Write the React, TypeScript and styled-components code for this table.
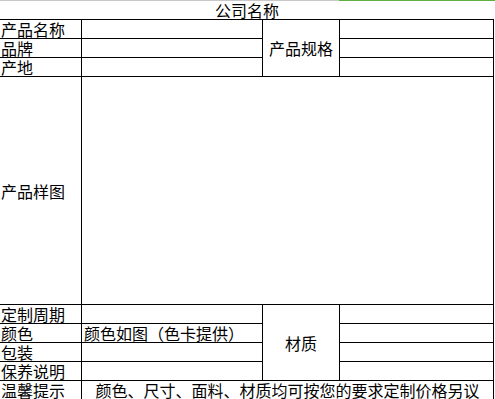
import styled, { createGlobalStyle } from 'styled-components';

const GlobalStyle = createGlobalStyle`
  html, body {
    margin: 0;
    padding: 0;
    background: #ffffff;
  }
  body {
    font-family: "Noto Sans CJK SC", "Noto Sans", sans-serif;
    color: #000000;
  }
`;

const Sheet = styled.div`
  width: 495px;
  height: 399px;
  overflow: hidden;
  background: #ffffff;
`;

const TopEdge = styled.div`
  display: flex;
  height: 1px;
`;

const EdgePart = styled.div<{ $color: string; $width: string }>`
  width: ${(p) => p.$width};
  flex: ${(p) => (p.$width === 'auto' ? 1 : 'none')};
  background: ${(p) => p.$color};
`;

const Grid = styled.div`
  display: grid;
  width: 494px;
  grid-template-columns: 82px 181px 77px 154px;
  grid-template-rows: 19px 19px 19px 19px 228px 19px 19px 19px 19px 19px;
`;

const Cell = styled.div<{ $col: string; $row: string; $center?: boolean; $pad?: number }>`
  grid-column: ${(p) => p.$col};
  grid-row: ${(p) => p.$row};
  box-sizing: border-box;
  border-right: 1px solid #000000;
  border-bottom: 1px solid #000000;
  display: flex;
  align-items: center;
  justify-content: ${(p) => (p.$center ? 'center' : 'flex-start')};
  padding-left: ${(p) => (p.$center ? 0 : p.$pad ?? 1)}px;
  font-size: 16px;
  line-height: 16px;
  white-space: nowrap;
`;

const Title = styled(Cell)`
  border-right: none;
`;

export default function App() {
  return (
    <Sheet>
      <GlobalStyle />
      <TopEdge>
        <EdgePart $color="#c8c8c8" $width="339px" />
        <EdgePart $color="#5fb041" $width="auto" />
      </TopEdge>
      <Grid>
        <Title $col="1 / 5" $row="1" $center>公司名称</Title>

        <Cell $col="1" $row="2">产品名称</Cell>
        <Cell $col="2" $row="2" />
        <Cell $col="3" $row="2 / 5" $center>产品规格</Cell>
        <Cell $col="4" $row="2" />

        <Cell $col="1" $row="3">品牌</Cell>
        <Cell $col="2" $row="3" />
        <Cell $col="4" $row="3" />

        <Cell $col="1" $row="4">产地</Cell>
        <Cell $col="2" $row="4" />
        <Cell $col="4" $row="4" />

        <Cell $col="1" $row="5">产品样图</Cell>
        <Cell $col="2 / 5" $row="5" />

        <Cell $col="1" $row="6">定制周期</Cell>
        <Cell $col="2" $row="6" />
        <Cell $col="3" $row="6 / 10" $center>材质</Cell>
        <Cell $col="4" $row="6" />

        <Cell $col="1" $row="7">颜色</Cell>
        <Cell $col="2" $row="7" $pad={2}>颜色如图（色卡提供）</Cell>
        <Cell $col="4" $row="7" />

        <Cell $col="1" $row="8">包装</Cell>
        <Cell $col="2" $row="8" />
        <Cell $col="4" $row="8" />

        <Cell $col="1" $row="9">保养说明</Cell>
        <Cell $col="2" $row="9" />
        <Cell $col="4" $row="9" />

        <Cell $col="1" $row="10">温馨提示</Cell>
        <Cell $col="2 / 5" $row="10" $center>颜色、尺寸、面料、材质均可按您的要求定制价格另议</Cell>
      </Grid>
    </Sheet>
  );
}
